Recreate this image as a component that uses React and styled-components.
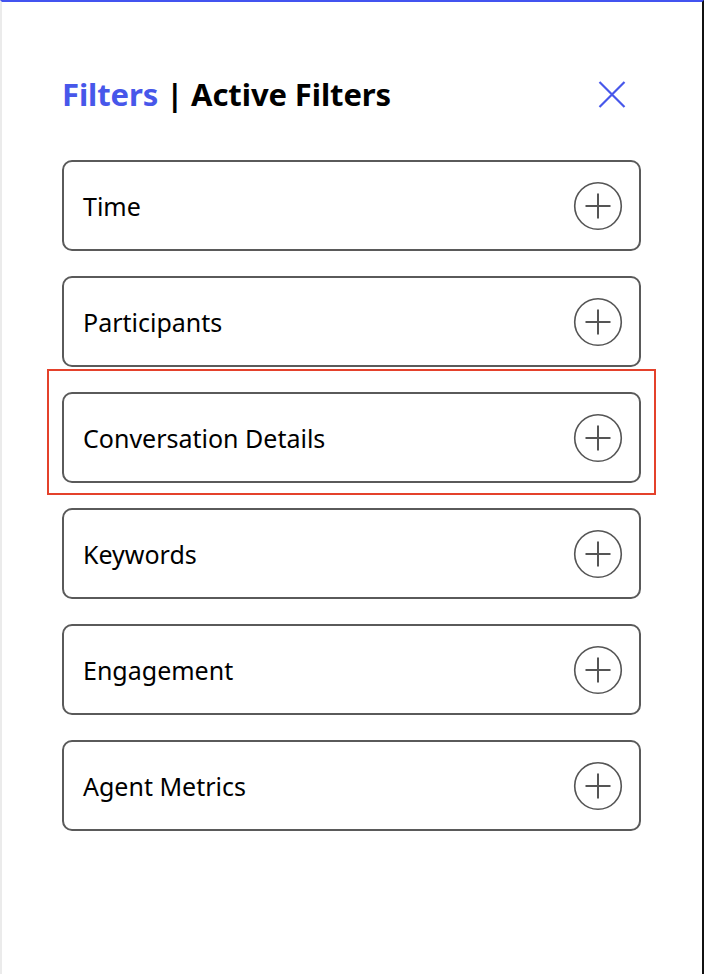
import React from 'react';
import styled, { createGlobalStyle } from 'styled-components';

const GlobalStyle = createGlobalStyle`
  html, body {
    margin: 0;
    padding: 0;
    background: #ffffff;
  }
  body {
    font-family: "Noto Sans", "Open Sans", sans-serif;
  }
`;

const FILTERS = [
  { label: 'Time' },
  { label: 'Participants' },
  { label: 'Conversation Details', highlighted: true },
  { label: 'Keywords' },
  { label: 'Engagement' },
  { label: 'Agent Metrics' },
];

const PlusCircle = () => (
  <svg width="50" height="50" viewBox="0 0 50 50" fill="none">
    <circle cx="25" cy="25" r="23.3" stroke="#555555" strokeWidth="1.6" />
    <path d="M25 12.5V37.5M12.5 25H37.5" stroke="#555555" strokeWidth="2" />
  </svg>
);

const CloseIcon = () => (
  <svg width="28" height="27" viewBox="0 0 28 27" fill="none">
    <path d="M1.5 1L26.5 26M26.5 1L1.5 26" stroke="#4757ea" strokeWidth="2.2" />
  </svg>
);

const App = () => {
  return (
    <>
      <GlobalStyle />
      <Panel>
        <Header>
          <Title>
            <Active>Filters</Active> | Active Filters
          </Title>
          <CloseButton aria-label="Close">
            <CloseIcon />
          </CloseButton>
        </Header>
        <List>
          {FILTERS.map(item => (
            <Card key={item.label} highlighted={item.highlighted}>
              <Label>{item.label}</Label>
              <AddButton aria-label={`Add ${item.label}`}>
                <PlusCircle />
              </AddButton>
            </Card>
          ))}
        </List>
      </Panel>
    </>
  );
};

const Panel = styled.div`
  box-sizing: border-box;
  height: 974px;
  border-top: 2px solid #4353f0;
  border-left: 2px solid #ebebeb;
  border-right: 2px solid #111111;
  padding: 70px 61px 0 60px;
`;

const Header = styled.div`
  display: flex;
  align-items: center;
  justify-content: space-between;
  height: 44px;
  padding-right: 15px;
`;

const Title = styled.h1`
  margin: 0;
  font-size: 31px;
  font-weight: 700;
  color: #000000;
  letter-spacing: -0.1px;
`;

const Active = styled.span`
  color: #4757ea;
`;

const CloseButton = styled.button`
  display: flex;
  border: 0;
  padding: 0;
  background: none;
  cursor: pointer;
`;

const List = styled.div`
  display: flex;
  flex-direction: column;
  gap: 25px;
  margin-top: 44px;
`;

const Card = styled.div`
  position: relative;
  box-sizing: border-box;
  display: flex;
  align-items: center;
  justify-content: space-between;
  height: 91px;
  padding: 0 16px 0 19px;
  border: 2px solid #5a5a5a;
  border-radius: 10px;

  ${({ highlighted }) => highlighted && `
    &::after {
      content: '';
      position: absolute;
      top: -25px;
      left: -17px;
      right: -17px;
      bottom: -14px;
      border: 2px solid #e4412b;
      pointer-events: none;
    }
  `}
`;

const Label = styled.span`
  font-size: 25px;
  color: #000000;
`;

const AddButton = styled.button`
  display: flex;
  border: 0;
  padding: 0;
  background: none;
  cursor: pointer;
`;

export default App;
